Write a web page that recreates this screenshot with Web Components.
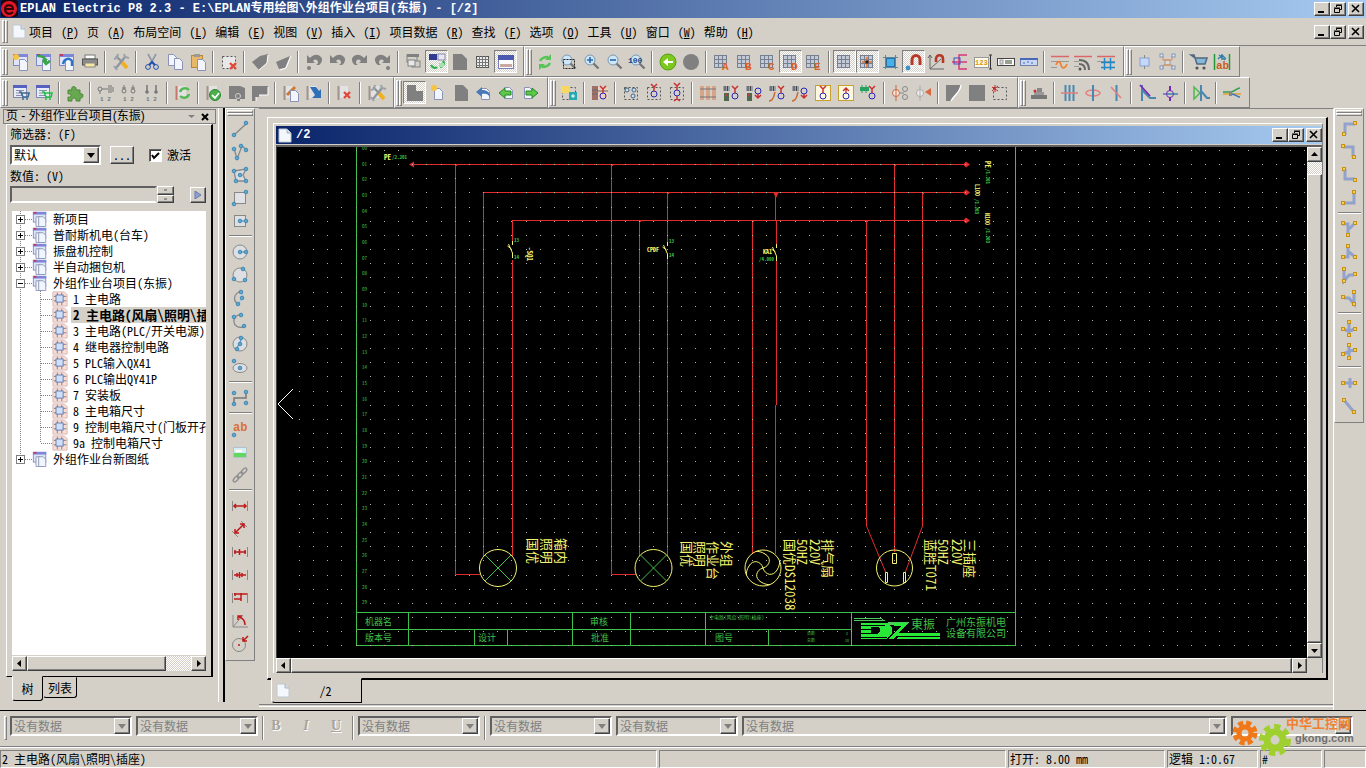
<!DOCTYPE html>
<html lang="zh-CN">
<head>
<meta charset="utf-8">
<title>EPLAN Electric P8 2.3</title>
<style>
    :root {
        --face: #d4d0c8;
        --shadow: #808080;
        --title: linear-gradient(90deg, #0a246a, #a6caf0);
        --song: "Noto Sans Mono CJK SC", "Liberation Mono", "Noto Sans CJK SC", monospace;
    }
    html, body { margin: 0; height: 100%; }
    body {
        display: flex;
        flex-direction: column;
        min-height: 100vh;
        overflow: hidden;
        background: var(--face);
        color: #000;
        font: 12px/16px var(--song);
    }
    .row { display: flex; height: 31px; }
    main { display: flex; flex: 1; min-height: 0; padding-right: 2px; }
    .divider { width: 4px; margin: 0 0 8px 2px; border-left: 1px solid #fff; border-right: 2px solid #000; }
</style>
</head>
<body>

<title-bar></title-bar>
<menu-bar></menu-bar>
<div class="row">
    <tool-band items="new open save print | options | cut copy paste | delete | navback navfwd | undolist undo redo redolist | windows *sync page table *window"></tool-band>
    <tool-band items="refresh zoomwin zoomin zoomout zoom100 | back forward | gridA gridB gridC *gridD gridE | *grid *snap objsnap *magnet magnetaxis tree123 n123 smart ruler | wave radio netgrid"></tool-band>
    <tool-band items="chipsmall chipnet | cart abtext"></tool-band>
</div>
<div class="row">
    <tool-band items="listcart listcartg | puzzle | dev1 dev2 dev3 | syncdoc | check graydoc grayflag | pencil arrowdoc | deldoc | tooldoc"></tool-band>
    <tool-band items="*graypage newpage graypage2 undopage pageleft pageright"></tool-band>
    <tool-band items="macro | strip | plug1 plug2 plug3 | coils termA termB termC termD boxA boxB greenterm | lamp1 lamp2 | triangle square dashbox"></tool-band>
    <tool-band items="press | lines1 lines2 lines3 | wireA wireB | shape | cable"></tool-band>
</div>

<main>
    <page-navigator heading="页 - 外组作业台项目(东振)">
        <page-tree></page-tree>
    </page-navigator>
    <div class="divider"></div>
    <tool-band vertical items="line polyline polygon rect rectc | circle circle3 arc arc3 sector ellipse | spline | text image link | dim1 dim2 dim3 dim4 dim5 dim6 dim7"></tool-band>
    <mdi-window heading="/2">
        <schematic-view></schematic-view>
    </mdi-window>
    <tool-band vertical items="cn1 cn2 cn3 cn4 | tn1 tn2 tn3 tn4 | cr1 cr2 | jp1 jp2"></tool-band>
</main>

<format-bar></format-bar>
<status-bar></status-bar>

<script>

// ---------- icons, drawn on an 18x18 box ----------

const p = (d, s, w = 1, f = 'none') => `<path d="${d}" stroke="${s}" stroke-width="${w}" fill="${f}"/>`;
const r = (x, y, w, h, f, s = 'none') => `<rect x="${x}" y="${y}" width="${w}" height="${h}" fill="${f}" stroke="${s}"/>`;
const c = (x, y, rad, f, s = 'none') => `<circle cx="${x}" cy="${y}" r="${rad}" fill="${f}" stroke="${s}"/>`;
const t = (x, y, size, fill, str) => `<text x="${x}" y="${y}" font-size="${size}" font-weight="700" fill="${fill}" font-family="Liberation Mono, monospace">${str}</text>`;
const n = (...pts) => pts.map(([x, y]) => c(x, y, 1.8, '#5fa8d0', '#3f88b4')).join('');

const sheet = (x, y) => p(`M${x} ${y}h5l3 3v8h-8z`, '#8a93b5', 1, '#f2f5fb');
const win = r(1.5, 1.5, 14, 11, '#dfe5f8', '#7f88c8') + r(1, 1, 15, 3, '#7d86d8') + r(2, 1, 3, 2, '#c03868');
const list = r(1.5, 1.5, 13, 12, '#e8ebf8', '#8088b0') + r(1, 1, 14, 3, '#5560c0') + p('M4 6.5h8M4 9h6M4 11.5h6', '#8a8fb0');
const cartAt = (x, y, col) => p(`M${x} ${y}h2l2 5h5l1-4h-7`, col, 1.6) + c(x + 4, y + 7, 1, col) + c(x + 8, y + 7, 1, col);
const cells = r(1.5, 2.5, 12, 12, '#c3cad6', '#778090') + p('M5.5 2v13M9.5 2v13M1 6.5h13M1 10.5h13', '#778090');
const lens = c(8, 7, 5, '#cfe6f8', '#7898b0') + p('M11.5 10.5l5 5', '#777', 2.4);
const grayDoc = p('M2.5 2v14', '#a0948c', 2) + r(4, 2, 8, 12, '#e2e2e2');
const cross = (x, y) => p(`M${x} ${y}l6 6m0-6l-6 6`, '#e04838', 2.4);
const wrench = (x) => p(`M${x + 5} 8l6 7`, '#f0b020', 4) + p(`M${x} 3l5 5`, '#8c949c', 2.4) + p(`M${x + 9} 4l-9 11`, '#8c949c', 2.2) + p(`M${x - 2} 6l3-1l1-4M${x + 8} 1l1 3l4 1M${x - 2} 13l3 4`, '#9aa2aa', 2);
const dashed = (f = 'none') => `<rect x="2.5" y="3.5" width="13" height="12" fill="${f}" stroke="#555" stroke-dasharray="2 2"/>`;
const arrow = (flip) => `<g transform="${flip ? 'translate(18 0) scale(-1 1)' : ''}">${p('M2 2v8h8L8 8c2-2 4-2 5 1c0 2-1 2-2 3h3c3-2 4-6 2-8c-3-3-7-3-11 1z', 'none', 0, '#808080')}</g>`;
const ring = (x, y, up) => c(x, y, 3, 'none', '#2828b8') + p(up ? `M${x} ${y - 3}v-4m-3-3l3 3l3-3` : `M${x} ${y + 3}v3m-3-2l3 3l3-3`, '#c83030', 1.5);
const termBox = r(1, 2, 7, 5, '#9aa0a8') + p('M3 2v5M5.5 2v5', '#444');
const dim = (d) => p('M1.5 4v10M16.5 4v10', '#888') + p(d, '#c01818', 1.5);
const gold = (d, ...pts) => p(d, '#93a2cc', 3) + pts.map(([x, y]) => r(x - 1.5, y - 1.5, 3, 3, '#f0d060', '#c89010')).join('');
const gridLetter = (letter) => cells + t(9, 17, 11, '#e06020', letter);

const ICONS = {
    new: win + sheet(7.5, 6.5) + c(4, 4, 3, '#f5c542'),
    open: win + sheet(7.5, 6.5) + p('M3 3c5 0 8 2 8 6M8 7l3 4l4-3', '#35a845', 2.6),
    save: win + sheet(7.5, 6.5) + p('M5 11c1-5 6-7 9-3v5', '#2e72c8', 2.4),
    print: r(4, 2, 10, 4, '#fff', '#777') + r(1.5, 6, 15, 6, '#8b8b8b', '#555') + r(4, 10, 10, 4, '#f6e8a0', '#888'),
    options: wrench(4),
    cut: p('M5 1l6 11M13 1L7 12', '#8c98a8', 1.6) + c(5, 14, 2.4, 'none', '#2050b0') + c(13, 14, 2.4, 'none', '#2050b0') + p('M6 12l3-3l3 3', '#2050b0', 2),
    copy: sheet(2.5, 1.5) + sheet(8.5, 5.5),
    paste: r(2.5, 2.5, 11, 12, '#e8b868', '#b88838') + r(5, 1, 6, 3, '#999') + sheet(8.5, 6.5),
    delete: dashed('#e8e8e8') + cross(10, 10),
    navback: p('M1 9l8-6l8-2l-1 9l-8 7z', 'none', 0, '#808080') + p('M17 2l-1 8l-8 7', '#fff'),
    navfwd: p('M2 9l14-6l-5 12l-6 1z', 'none', 0, '#808080') + p('M17 3l-5 12l-6 2', '#fff'),
    undolist: arrow() + c(4, 15, 2, '#808080'),
    undo: arrow(),
    redo: arrow(true),
    redolist: arrow(true) + c(14, 15, 2, '#808080'),
    windows: r(2, 2, 10, 7, 'none', '#808080') + r(2, 1, 12, 3, '#808080') + r(7, 8, 8, 6, '#d4d0c8', '#808080') + r(3, 7, 7, 6, '#e8e8e8', '#808080'),
    sync: r(1, 1, 8, 6, '#303c90') + r(10, 1, 7, 6, '#e8e8f4', '#88a') + p('M3 12c2 4 5 3 6 2M15 8c2 3 0 5-3 6', '#30b050', 2.4) + r(11, 10, 5, 4, '#a8e0b0'),
    page: p('M2 1h9l5 5v11H2z', 'none', 0, '#808080'),
    table: r(2.5, 3.5, 12, 11, '#eee', '#555') + p('M5.5 3v12M8.5 3v12M11.5 3v12M2 6.5h13M2 9.5h13M2 12.5h13', '#777'),
    window: r(1.5, 2.5, 15, 13, '#fbfbfb', '#7880b8') + r(1, 2, 16, 5, '#4a5ab0') + r(3, 11, 12, 3, '#c8a8a0'),

    refresh: p('M4 8c2-4 5-4 8-4M14 10c-2 4-5 4-8 4', '#58c458', 2.6) + p('M15 1v6h-6zM3 17v-6h6z', 'none', 0, '#58c458'),
    zoomwin: lens + `<rect x="4.5" y="6.5" width="11" height="9" fill="none" stroke="#222" stroke-dasharray="2 1"/>`,
    zoomin: lens + p('M5 7h6M8 4v6', '#2868a8', 1.6),
    zoomout: lens + p('M5 7h6', '#2868a8', 1.6),
    zoom100: lens + t(0, 10, 8, '#204880', '100'),
    back: c(9, 9, 8, '#7cc820', '#58a010') + p('M4 9l5-4v3h5v2H9v3z', 'none', 0, '#fff'),
    forward: c(9, 9, 8, '#808080'),
    gridA: gridLetter('A'),
    gridB: gridLetter('B'),
    gridC: gridLetter('C'),
    gridD: gridLetter('D'),
    gridE: gridLetter('E'),
    grid: cells,
    snap: cells + p('M8 4v10M3 9h10', '#e07030', 1.5) + r(6.5, 7.5, 3, 3, '#222'),
    objsnap: r(4.5, 5.5, 8, 8, '#48b0e8', '#3070a0') + p('M3.5 2v14M13.5 2v14M1 4.5h15M1 14.5h15', '#5888a8'),
    magnet: p('M7 13V7c0-6 8-6 8 0v6', '#b83828', 3) + r(5, 12, 4, 3, '#eee') + r(13, 12, 4, 3, '#eee') + c(3, 15, 2.4, '#4090c0'),
    magnetaxis: p('M2 2v14h14M2 2l-2 3M2 2l2 3M2 16L13 6', '#666') + p('M8 9V6c0-5 7-5 7 0v4', '#b83828', 2.6),
    tree123: p('M16 2H8v14h8M8 9h8M1 9h7', '#d83878', 1.5) + r(3, 5, 6, 6, 'none', '#4050c0'),
    n123: r(0.5, 4.5, 14, 10, '#fffbe8', '#999') + t(1, 12, 7, '#d89800', '123') + p('M16.5 2v14M15 2h3M15 16h3', '#333'),
    smart: r(0.5, 5.5, 17, 7, '#fff', '#444') + r(8, 7, 7, 4, '#9aa090') + r(3, 7, 3, 4, '#ddd', '#999'),
    ruler: r(0.5, 5.5, 17, 7, '#c8d8f4', '#7080a8') + r(0, 5, 18, 2, '#4868b8') + p('M3 10h2M7 9h2M11 10h2', '#4868b8'),
    wave: p('M0 3.5h18', '#d86868', 1.5) + p('M0 8.5h18M0 14.5h6', '#999') + p('M5 12c2-5 4-4 5 0s4 4 6-1', '#f08030', 1.6),
    radio: p('M0 3.5h18', '#d86868', 1.5) + p('M0 8.5h5M0 13.5h5', '#999') + p('M5 7c7 0 10 4 10 10M5 11c4 0 6 2 6 6', '#666', 2) + c(6, 16, 1.5, '#555'),
    netgrid: p('M0 3.5h18', '#d86868', 1.5) + p('M0 8.5h18', '#999') + p('M7.5 5v12M13.5 5v12M4 9.5h14M4 14.5h14', '#2088c8', 1.5),
    chipsmall: r(4, 5, 9, 8, '#c4d8f8', '#88a0d0') + p('M8.5 2v3M8.5 13v3', '#888'),
    chipnet: r(6, 7, 5, 5, '#ddd', '#999') + p('M4 3v4h9V3M4 16v-4h9v4', '#e08850') + [[1, 1], [13, 1], [1, 13], [13, 13]].map(([x, y]) => r(x, y, 3, 3, '#eee', '#7c94b8')).join(''),
    cart: p('M1 2h3l3 9h8l2-6H5z', '#506880', 1.5, '#88b8d8') + c(7, 15, 1.6, '#555') + c(14, 15, 1.6, '#555'),
    abtext: p('M1.5 1v16M16.5 1v16', '#209838', 1.5) + t(3, 16, 11, '#c86020', 'ab') + p('M5 6l4-4l4 4M6 2l6 5M9 1v6', '#3080a8', 1.4),

    listcart: list + cartAt(7, 8, '#3c6890'),
    listcartg: list + cartAt(7, 8, '#20c040'),
    puzzle: p('M2 6h4c-2-4 5-5 4 0h4v4c4-2 4 5 0 4v3h-4c1-4-5-4-4 0H2v-4c4 1 4-4 0-3z', '#488838', 1, '#68a850'),
    dev1: c(3, 5, 2, 'none', '#777') + p('M5 5h6M12 1v8M14 1v8M3 7v3M16 3v5', '#777') + t(3, 17, 6, '#777', '1 2'),
    dev2: c(4, 7, 2, 'none', '#777') + c(13, 7, 2, 'none', '#777') + p('M4 1v4M13 1v4M2 4h4M11 4h4', '#777') + t(3, 17, 6, '#777', '1 2'),
    dev3: c(4, 8, 1.8, '#777') + c(13, 8, 1.8, '#777') + p('M4 1v6M13 1v6', '#777', 1.5) + t(3, 17, 6, '#777', '1 2'),
    syncdoc: p('M2.5 2v14', '#c87870', 2) + r(4, 2, 8, 12, '#e2e2e2') + p('M6 8c1-4 6-5 9-2M15 10c-1 4-6 5-9 2', '#50b850', 2.4),
    check: grayDoc + c(10, 11, 5.5, '#48b048', '#288830') + p('M7 11l3 3l4-5', '#fff', 1.8),
    graydoc: p('M1 2h11l5 2v11h-5v2H9v-2H1z', 'none', 0, '#808080') + c(10, 12, 2.5, '#808080', '#d4d0c8'),
    grayflag: p('M1 2h16v9h-9v2H5v4H1z', 'none', 0, '#808080') + p('M17 3v8h-9M5 13v4', '#fff'),
    pencil: grayDoc + p('M5 11l8-8', '#d07830', 3) + sheet(8.5, 6.5),
    arrowdoc: grayDoc + p('M5 3l6 0l3 4l2-2v9H7l3-3z', 'none', 0, '#3070b8'),
    deldoc: grayDoc + cross(8, 8),
    tooldoc: grayDoc + wrench(6),
    graypage: p('M1 1h9v6h7v10H1z', 'none', 0, '#808080'),
    newpage: sheet(5.5, 4.5) + c(5, 4, 3, '#f5c542'),
    graypage2: p('M3 1h8l5 5v11H3z', 'none', 0, '#808080'),
    undopage: sheet(6.5, 4.5) + p('M1 8l6-5v3c5 0 8 2 8 7c-2-3-4-4-8-3v3z', 'none', 0, '#4878b8'),
    pageleft: sheet(6.5, 3.5) + p('M1 9l6-5v3h6v4H7v3z', '#208828', 1, '#60c848'),
    pageright: sheet(3.5, 3.5) + p('M17 9l-6-5v3H5v4h6v3z', '#208828', 1, '#60c848'),
    macro: dashed() + r(1, 2, 8, 7, '#f8d860') + r(9, 8, 8, 8, '#28a8b0') + p('M11 12h4M13 10v4', '#fff'),
    strip: r(1, 2, 6, 14, '#a07068') + r(7, 3, 10, 12, '#ecd0c0') + p('M1 6h6M1 10h6M7 7h10', '#666') + ring(12, 12, true),
    plug1: dashed() + c(5, 6, 2, '#cde', '#468') + c(12, 6, 2, '#cde', '#468') + c(11, 12, 2, '#cde', '#468'),
    plug2: dashed() + ring(9, 10, true),
    plug3: dashed() + ring(9, 9, true) + p('M9 12v4M6 17l3-2l3 2', '#c83030', 1.5),
    coils: [2, 8, 14].map(x => p(`M${x} 2v14M${x + 2} 2v14`, '#d87848')).join('') + p('M1 5h16M1 13h16', '#777'),
    termA: termBox + r(2, 9, 5, 8, '#506850') + ring(13, 12, true) + c(4, 11, 1, '#e03030'),
    termB: termBox + r(2, 9, 5, 8, '#506850') + ring(13, 7, false) + c(4, 11, 1, '#e03030'),
    termC: termBox + p('M1 17c5 0 5-6 6-9', '#c86830', 1.5) + ring(13, 12, true),
    termD: termBox + p('M1 17c5 0 5-6 6-9', '#c86830', 1.5) + ring(13, 7, false),
    boxA: r(1.5, 1.5, 15, 15, '#fff8e0', '#c8a030') + ring(9, 12, true),
    boxB: r(1.5, 1.5, 15, 15, '#fff8e0', '#c8a030') + c(9, 12, 3, 'none', '#2828b8') + p('M9 9V4m-3 3l3-3l3 3', '#c83030', 1.3),
    greenterm: r(0, 3, 9, 4, '#28a060') + p('M2 1v8M6 1v8', '#28a060') + ring(12, 12, true),
    lamp1: c(5, 9, 3.5, '#f8e8e0', '#c86840') + p('M5 1v16', '#c86840') + c(14, 5, 2.5, 'none', '#888') + c(14, 13, 2.5, 'none', '#888') + p('M9 9h4', '#888'),
    lamp2: c(6, 9, 3.5, '#eee', '#aaa') + p('M6 1v16', '#aaa') + p('M11 8l6-4v8z', 'none', 0, '#d86840'),
    triangle: p('M1 1h15C15 9 9 11 6 17H1z', 'none', 0, '#808080') + p('M16 1C15 9 9 11 6 17', '#fff', 1.5),
    square: r(1, 1, 16, 16, '#808080'),
    dashbox: dashed() + p('M4 1v7M1 3l6 4M7 2L1 7', '#c82828'),
    press: r(1, 11, 16, 4, '#777') + r(4, 8, 10, 3, '#999') + r(7, 4, 5, 4, '#888') + c(5, 7, 1.5, '#c83030'),
    lines1: p('M4.5 1v16M8.5 1v16M12.5 1v16', '#4888b0', 2) + p('M0 9h17', '#e08080', 1.6),
    lines2: `<ellipse cx="9" cy="9" rx="7" ry="3" fill="none" stroke="#e08080" stroke-width="1.6"/>` + p('M9 1v16', '#4888b0', 2),
    lines3: p('M9.5 1v16', '#4888b0', 2) + p('M4 3l10 11', '#e08080', 1.6),
    wireA: p('M4 1v16M4 6l8 8h6', '#4888b0', 2) + p('M2 1l10 11', '#7828b8', 1.8),
    wireB: p('M2 10h15', '#4888b0', 1.6) + p('M9 2v5M9 13v4', '#7828b8', 2) + c(9, 10, 3.5, 'none', '#7828b8'),
    shape: p('M2 3l6 6l-6 6z', '#48b848', 1.4) + p('M9 1v16M9 7l6 7h3', '#4888b0', 2),
    cable: p('M0 8h7c5 0 6-4 10-4', '#30a050', 1.5) + p('M0 10h18', '#e0a030', 1.5) + p('M8 10c5 0 6 3 9 3', '#3878c0', 1.5) + r(6, 7, 3, 5, '#888'),

    line: p('M3 15L15 4', '#888', 1.5) + n([3, 15], [15, 3]),
    polyline: p('M3 5l3 11l5-13l5 4', '#888', 1.3) + n([3, 6], [6, 15], [10, 3], [15, 7]),
    polygon: p('M3 5l12-2l-3 6l3 6H5z', '#888', 1.3, '#d8dce2') + n([3, 5], [15, 3], [15, 15], [5, 15], [9, 9]),
    rect: r(3.5, 3.5, 11, 11, '#e2e2e6', '#888') + n([3, 15], [15, 3]),
    rectc: r(3.5, 3.5, 11, 11, '#dedfe3', '#888') + p('M9 9h6', '#3f88b4') + n([9, 9], [15, 9]),
    circle: c(9, 9, 7, '#dedfe3', '#888') + p('M9 9h6', '#3f88b4') + n([9, 9], [15, 9]),
    circle3: c(9, 9, 7, '#dedfe3', '#888') + n([12, 3], [3, 13], [14, 14]),
    arc: p('M10 2C2 5 2 12 7 15', '#888', 1.3) + p('M10 2l2 6l-5 7', '#90c8e8') + n([10, 3], [11, 9], [7, 15]),
    arc3: p('M10 3C0 2 0 18 13 15', '#888', 1.3) + n([10, 3], [3, 5], [13, 14]),
    sector: c(9, 9, 7, '#dedfe3', '#888') + p('M5 15l6-12', '#3f88b4') + n([10, 3], [9, 9], [6, 14]),
    ellipse: `<ellipse cx="9" cy="10" rx="7" ry="4.5" fill="#dedfe3" stroke="#888"/>` + n([3, 3], [9, 10]),
    spline: p('M3 15v-6h12V4', '#777', 1.5) + n([3, 4], [3, 15], [15, 3], [15, 14]),
    text: t(2, 11, 12, '#d87038', 'ab') + n([3, 15]),
    image: r(2.5, 4.5, 13, 10, '#d8ecf8', '#b8c0c8') + r(3, 10, 12, 4, '#60d860') + r(5, 7, 6, 2, '#fff'),
    link: [[5, 13], [9, 9], [13, 5]].map(([x, y]) => `<ellipse cx="${x}" cy="${y}" rx="3.5" ry="1.8" transform="rotate(-45 ${x} ${y})" fill="none" stroke="#909090" stroke-width="1.4"/>`).join(''),
    dim1: dim('M3 9h12M5 7L3 9l2 2M13 7l2 2l-2 2'),
    dim2: p('M1 11l6 6M10 1l6 6', '#888') + p('M4 13l9-9M4 9v4h4M9 4h4v4', '#c01818', 1.5),
    dim3: dim('M3 9h12M8.5 6v6M4 7v4M14 7v4'),
    dim4: dim('M3 9h12M6 7v4M11 7v4M8.5 6v6'),
    dim5: dim('M3 5h13M3 10h7M4 4v3M10 4v8'),
    dim6: p('M2 3v12h15M2 15L12 3', '#888') + p('M8 5c4 1 6 4 6 8M7 8V4h4', '#c01818', 1.5),
    dim7: c(8, 10, 6.5, 'none', '#888') + c(8, 10, 1, '#c01818') + p('M17 1l-5 5M12 2v4h4', '#c01818', 1.5),

    cn1: gold('M5 15V4h10', [4, 14], [15, 3]),
    cn2: gold('M3 4h10v10', [3, 3], [14, 14]),
    cn3: gold('M5 3v10h10', [4, 3], [15, 14]),
    cn4: gold('M3 14h11V4', [3, 14], [14, 3]),
    tn1: gold('M2 4h6v10M9 9l6-6', [3, 3], [15, 3], [8, 15]),
    tn2: gold('M2 14h6V4M9 9l6 5', [3, 14], [15, 14], [8, 3]),
    tn3: gold('M4 3v12l5-6h5', [4, 3], [4, 15], [15, 8]),
    tn4: gold('M14 3v12l-5-6H4', [14, 3], [14, 15], [3, 8]),
    cr1: gold('M9 3v12M3 9c3 0 4 2 4 3M15 9c-3 0-4 2-4 3', [9, 2], [3, 9], [15, 9], [9, 15]),
    cr2: gold('M9 3v12M3 11l5-2M10 8l5-1', [9, 2], [3, 11], [15, 7], [9, 15]),
    jp1: gold('M3 9h12M10 4v10', [3, 9], [15, 9]),
    jp2: gold('M4 3l10 12', [4, 3], [14, 15]),
};

const BEVEL = `
    .raised {
        background: var(--face);
        border: 1px solid;
        border-color: #fff #404040 #404040 #fff;
        box-shadow: inset -1px -1px 0 #808080;
    }
    .dither {
        background: repeating-conic-gradient(#fff 0 25%, #d4d0c8 0 50%) 0 0 / 2px 2px;
    }
`;

const pageIcon = `<svg width="14" height="15" viewBox="0 0 14 15"><path d="M1 1h8l4 4v9H1z" fill="#f4f7fb" stroke="#c0c8d4"/><path d="M9 1v4h4" fill="#d8e0ea" stroke="#a8b4c0"/></svg>`;


// minimize, restore, close
class WinButtons extends HTMLElement {

    constructor() {

        super();

        this.attachShadow({mode: "open"}).innerHTML = `
            <style>
                ${BEVEL}
                :host { display: flex; height: 14px; }
                button { width: 16px; height: 14px; padding: 0; display: grid; place-items: center; }
                button:last-child { margin-left: 2px; }
                path { fill: none; stroke: #000; }
            </style>
            <button class="raised" aria-label="minimize"><svg width="12" height="10"><path d="M2 8h6" stroke-width="2"/></svg></button>
            <button class="raised" aria-label="restore"><svg width="12" height="10"><path d="M4.5 3V1.5h5v4H8M4 1h6M2.5 5v3.5h5V4.5h-5M2 4h6"/></svg></button>
            <button class="raised" aria-label="close"><svg width="12" height="10"><path d="M2 1l7 7M9 1l-7 7" stroke-width="1.6"/></svg></button>
        `;

    }

}

customElements.define('win-buttons', WinButtons);


class TitleBar extends HTMLElement {

    constructor() {

        super();

        this.attachShadow({mode: "open"}).innerHTML = `
            <style>
                :host {
                    display: flex;
                    align-items: center;
                    height: 18px;
                    padding-right: 2px;
                    background: var(--title);
                    color: #fff;
                    font: bold 12px/18px "Liberation Mono", "Noto Sans CJK SC", monospace;
                    white-space: pre;
                }
                span { flex: 1; margin-left: 2px; }
            </style>
            <svg width="18" height="18" viewBox="0 0 18 18">
                <rect x="1" width="17" height="17" rx="3" fill="#200508"/>
                <ellipse cx="9" cy="9" rx="8" ry="8" fill="#e01828"/>
                <path d="M5 9h8c0-5-8-5-8 0s5 6 8 3" fill="none" stroke="#300" stroke-width="2"/>
            </svg>
            <span>EPLAN Electric P8 2.3 - E:\\EPLAN专用绘图\\外组作业台项目(东振) - [/2]</span>
            <win-buttons></win-buttons>
        `;

    }

}

customElements.define('title-bar', TitleBar);


class MenuBar extends HTMLElement {

    menus = [
        ['项目', 'P'], ['页', 'A'], ['布局空间', 'L'], ['编辑', 'E'], ['视图', 'V'], ['插入', 'I'],
        ['项目数据', 'R'], ['查找', 'F'], ['选项', 'O'], ['工具', 'U'], ['窗口', 'W'], ['帮助', 'H'],
    ];

    constructor() {

        super();

        this.attachShadow({mode: "open"}).innerHTML = `
            <style>
                :host { display: flex; align-items: center; height: 27px; padding: 0 2px; border-bottom: 1px solid #808080; }
                .grip { width: 1px; height: 21px; border: 1px solid; border-color: #fff #808080 #808080 #fff; }
                svg { margin: 0 3px 0 4px; }
                nav { display: flex; flex: 1; }
                button { border: 0; background: none; padding: 0 8px 0 0; margin: 0; font: inherit; white-space: pre; }
                button span { margin-left: 2px; }
            </style>
            <div class="grip"></div><div class="grip"></div>
            ${pageIcon}
            <nav>${this.menus.map(([name, key]) => `<button>${name}<span> (<u>${key}</u>)</span></button>`).join('')}</nav>
            <win-buttons></win-buttons>
        `;

    }

}

customElements.define('menu-bar', MenuBar);


// items: icon names; "|" is a separator, a leading "*" marks a pressed button
class ToolBand extends HTMLElement {

    static get observedAttributes() {

        return ['items'];

    }

    constructor() {

        super();

        this.attachShadow({mode: "open"});

    }

    attributeChangedCallback() {

        this.shadowRoot.innerHTML = this.template;

    }

    button(name) {

        if (name === '|') return '<hr>';

        const key = name.replace('*', '');

        return `<button aria-label="${key}" class="${name[0] === '*' ? 'on dither' : ''}"><svg width="18" height="18" viewBox="0 0 18 18">${ICONS[key]}</svg></button>`;

    }

    get template() {

        return `
            <style>
                ${BEVEL}
                :host {
                    display: flex;
                    align-items: center;
                    box-sizing: border-box;
                    flex: none;
                    padding: 0 6px 0 1px;
                    border: 1px solid;
                    border-color: #fff #808080 #808080 #fff;
                }
                .grip { width: 1px; height: 24px; border: 1px solid; border-color: #fff #808080 #808080 #fff; }
                .grip + button { margin-left: 1px; }
                button { width: 23px; height: 23px; padding: 0; border: 1px solid transparent; background-color: transparent; display: grid; place-items: center; }
                button.on { border-color: #808080 #fff #fff #808080; }
                svg { overflow: visible; }
                hr { box-sizing: border-box; width: 2px; height: 22px; margin: 0 3px; border: 0; border-left: 1px solid #808080; border-right: 1px solid #fff; }
                :host([vertical]) { flex-direction: column; align-self: flex-start; width: 30px; padding: 1px 0 5px; }
                :host([vertical]) .grip { width: 24px; height: 1px; }
                :host([vertical]) .grip + button { margin: 1px 0 0; }
                :host([vertical]) hr { width: 23px; height: 2px; margin: 3px 0; border: 0; border-top: 1px solid #808080; border-bottom: 1px solid #fff; }
            </style>
            <div class="grip"></div><div class="grip"></div>
            ${this.getAttribute('items').split(' ').map(name => this.button(name)).join('')}
        `;

    }

}

customElements.define('tool-band', ToolBand);


class ScrollBar extends HTMLElement {

    constructor() {

        super();

        this.attachShadow({mode: "open"}).innerHTML = `
            <style>
                ${BEVEL}
                :host { display: flex; height: 15px; }
                :host([vertical]) { flex-direction: column; width: 15px; height: auto; }
                button { width: 15px; height: 15px; padding: 0; flex: none; display: grid; place-items: center; }
                .track { display: flex; flex: 1; min-height: 0; }
                :host([vertical]) .track { flex-direction: column; }
                .thumb { flex: 1; }
                .gap-start { flex: none; width: var(--before, 0); }
                .gap-end { flex: none; width: var(--after, 0); }
                :host([vertical]) .gap-start { width: auto; height: var(--before, 0); }
                :host([vertical]) svg { transform: rotate(90deg); }
            </style>
            <button class="raised" aria-label="back"><svg width="9" height="9"><path d="M6 1v7L2 4.5z"/></svg></button>
            <div class="track dither"><div class="gap-start"></div><div class="thumb raised"></div><div class="gap-end"></div></div>
            <button class="raised" aria-label="forward"><svg width="9" height="9"><path d="M3 1v7l4-3.5z"/></svg></button>
        `;

    }

}

customElements.define('scroll-bar', ScrollBar);


class ComboBox extends HTMLElement {

    constructor() {

        super();

        const off = this.hasAttribute('disabled');

        this.attachShadow({mode: "open"}).innerHTML = `
            <style>
                ${BEVEL}
                :host {
                    display: flex;
                    box-sizing: border-box;
                    height: 20px;
                    background: #fff;
                    border: 2px solid;
                    border-color: #606060 #fff #fff #606060;
                }
                :host([disabled]) { background: var(--face); }
                select { flex: 1; min-width: 0; border: 0; padding: 0 2px; background: transparent; appearance: none; font: inherit; color: #000; opacity: 1; }
                select:disabled { color: #808080; }
                i { width: 14px; display: grid; place-items: center; pointer-events: none; }
            </style>
            <select aria-label="${this.getAttribute('label')}" ${off ? 'disabled' : ''}><option>${this.getAttribute('value')}</option></select>
            <i class="raised"><svg width="8" height="5"><path d="M0 0h8L4 5z" fill="${off ? '#808080' : '#000'}"/></svg></i>
        `;

    }

}

customElements.define('combo-box', ComboBox);


// docked panel with the page tree
class PageNavigator extends HTMLElement {

    constructor() {

        super();

        this.attachShadow({mode: "open"}).innerHTML = `
            <style>
                ${BEVEL}
                :host { display: flex; flex-direction: column; width: 216px; flex: none; padding-bottom: 9px; box-sizing: border-box; }
                header {
                    display: flex;
                    align-items: center;
                    height: 13px;
                    margin: 1px 0 0 3px;
                    padding: 0 2px;
                    border: 1px solid #808080;
                    font: 12px/13px "Liberation Sans", "Noto Sans CJK SC", sans-serif;
                }
                header span { flex: 1; white-space: nowrap; }
                header svg { margin: 0 3px; }
                .body {
                    display: flex;
                    flex-direction: column;
                    flex: 1;
                    min-height: 0;
                    margin: 0 3px 0 6px;
                    padding: 1px 4px 5px 3px;
                    border: 1px solid;
                    border-color: #fff #000 #000 #fff;
                    border-right-width: 2px;
                }
                .line { display: flex; align-items: center; height: 16px; white-space: pre; }
                .filter { height: 20px; margin: 3px 0; }
                combo-box { width: 91px; }
                .more { width: 24px; height: 18px; margin: 0 15px 0 9px; padding: 0; font: inherit; line-height: 12px; }
                input[type=checkbox] {
                    appearance: none;
                    width: 13px;
                    height: 13px;
                    margin: 0 5px 0 0;
                    background: #fff;
                    border: 1px solid;
                    border-color: #606060 #fff #fff #606060;
                    box-shadow: inset 1px 1px 0 #404040;
                }
                input[type=checkbox]:checked { background: #fff url('data:image/svg+xml,<svg xmlns="http://www.w3.org/2000/svg" viewBox="0 0 11 11"><path d="M2 5l2 3l5-5" fill="none" stroke="black" stroke-width="2"/></svg>'); }
                label { display: flex; align-items: center; }
                .value { height: 17px; margin: 2px 0 8px; }
                .value input { flex: 1; min-width: 0; height: 17px; box-sizing: border-box; border: 2px solid; border-color: #606060 #d4d0c8 #fff #606060; background: var(--face); }
                .spin { display: flex; flex-direction: column; width: 17px; height: 17px; margin-right: 16px; }
                .spin button { flex: 1; padding: 0; min-height: 0; display: grid; place-items: center; }
                .go { width: 16px; height: 16px; padding: 0; margin-right: 1px; display: grid; place-items: center; }
                .tree { flex: 1; min-height: 0; overflow: hidden; background: #fff; margin: 0 1px 0 2px; }
                scroll-bar { --after: 25px; margin: 1px 1px 0 2px; }
                .tabs { display: flex; align-items: flex-start; margin-left: 12px; }
                .tabs button { height: 21px; padding: 0; width: 34px; border: 1px solid; border-color: transparent #000 #000 transparent; border-radius: 0 0 3px 3px; background: var(--face); font: inherit; }
                .tabs .sel { width: 31px; height: 25px; margin-top: -1px; border-left-color: #fff; }
            </style>
            <header>
                <span>${this.getAttribute('heading')}</span>
                <svg width="7" height="5"><path d="M0 1h7L3.5 4z" fill="#808080"/></svg>
                <svg width="9" height="8"><path d="M1 1l6 6M7 1L1 7" stroke="#000" stroke-width="2"/></svg>
            </header>
            <div class="body">
                <div class="line">筛选器: (F)</div>
                <div class="line filter">
                    <combo-box label="筛选器" value="默认"></combo-box>
                    <button class="more raised">...</button>
                    <label><input type="checkbox" checked>激活</label>
                </div>
                <label class="line" for="val">数值: (V)</label>
                <div class="line value">
                    <input id="val" type="text">
                    <div class="spin">
                        <button class="raised" aria-label="up"><svg width="3" height="2"><path d="M0 1h3" stroke="#555"/></svg></button>
                        <button class="raised" aria-label="down"><svg width="3" height="2"><path d="M0 1h3" stroke="#555"/></svg></button>
                    </div>
                    <button class="go raised" aria-label="go"><svg width="8" height="8"><path d="M1 0l6 4l-6 4z" fill="#8ca0d0" stroke="#6878b0"/></svg></button>
                </div>
                <div class="tree"><slot></slot></div>
                <scroll-bar></scroll-bar>
            </div>
            <div class="tabs"><button class="sel">树</button><button>列表</button></div>
        `;

    }

}

customElements.define('page-navigator', PageNavigator);


class PageTree extends HTMLElement {

    data = [
        { name: '新项目' },
        { name: '普耐斯机电(台车)' },
        { name: '振盘机控制' },
        { name: '半自动捆包机' },
        {
            name: '外组作业台项目(东振)',
            pages: [
                '1 主电路', '2 主电路(风扇\\照明\\插座)', '3 主电路(PLC/开关电源)', '4 继电器控制电路', '5 PLC输入QX41',
                '6 PLC输出QY41P', '7 安装板', '8 主电箱尺寸', '9 控制电箱尺寸(门板开孔)', '9a 控制电箱尺寸',
            ],
        },
        { name: '外组作业台新图纸', last: true },
    ];

    constructor() {

        super();

        this.attachShadow({mode: "open"}).innerHTML = this.template;

    }

    project({ name, pages, last }) {

        return `
            <li>
                <div class="node">
                    <svg width="20" height="16">
                        <path d="M8.5 0v${last ? 8 : 16}M13 8.5h7" stroke="#808080" stroke-dasharray="1 1"/>
                        <rect x="4.5" y="4.5" width="8" height="8" fill="#fff" stroke="#808080"/>
                        <path d="M6 8.5h5${pages ? '' : 'M8.5 6v5'}" stroke="#000"/>
                    </svg>
                    <svg width="16" height="16" viewBox="0 0 18 18">${win + sheet(4.5, 6.5) + sheet(7.5, 6.5)}</svg>
                    <span>${name}</span>
                </div>
                ${pages ? `<ul>${pages.map((page, i) => this.page(page, i === 1, i === pages.length - 1)).join('')}</ul>` : ''}
            </li>
        `;

    }

    page(name, selected, last) {

        return `
            <li class="node ${selected ? 'selected' : ''}">
                <svg width="40" height="16">
                    <path d="M8.5 0v16M28.5 0v${last ? 8 : 16}M29 8.5h11" stroke="#808080" stroke-dasharray="1 1"/>
                </svg>
                <svg width="16" height="16" viewBox="0 0 18 18">
                    <path d="M1 1h13l3 3v13H1z" fill="#f8dcd8" stroke="#d8b8b0"/>
                    <path d="M6 2v14M11 2v14M2 6h14M2 11h14" stroke="#707888"/>
                    <rect x="4.5" y="4.5" width="8" height="8" fill="#d0e0fc" stroke="#6078a8"/>
                </svg>
                <span>${name}</span>
            </li>
        `;

    }

    get template() {

        return `
            <style>
                :host { display: block; }
                ul { list-style: none; margin: 0; padding: 0; }
                .node { display: flex; height: 16px; line-height: 16px; white-space: pre; }
                .node svg { flex: none; fill: none; }
                .node span { flex: 1; padding-left: 2px; margin-left: 3px; }
                .selected span { background: var(--face); font-weight: 700; font-size: 13px; }
            </style>
            <ul>${this.data.map(item => this.project(item)).join('')}</ul>
        `;

    }

}

customElements.define('page-tree', PageTree);


// child window of the editor, with scroll bars and the document tab
class MdiWindow extends HTMLElement {

    constructor() {

        super();

        const heading = this.getAttribute('heading');

        this.attachShadow({mode: "open"}).innerHTML = `
            <style>
                :host {
                    display: flex;
                    flex-direction: column;
                    flex: 1;
                    min-width: 0;
                    margin-left: 4px;
                    padding: 8px 5px 3px 8px;
                    box-sizing: border-box;
                    border-top: 1px solid #808080;
                    border-right: 1px solid #fff;
                }
                .frame {
                    display: flex;
                    flex: 1;
                    min-height: 0;
                    padding: 5px 3px 5px 5px;
                    border: 1px solid;
                    border-color: #fff #000 #000 #fff;
                    border-right-width: 2px;
                    border-bottom-width: 2px;
                }
                .window {
                    display: flex;
                    flex-direction: column;
                    flex: 1;
                    min-width: 0;
                    padding: 2px 0 0 2px;
                    border: 1px solid #fff;
                    border-right-color: #808080;
                    border-bottom: 0;
                }
                header { display: flex; align-items: center; height: 18px; padding-left: 2px; background: var(--title); color: #fff; }
                header span { flex: 1; padding-left: 4px; font: bold 12px/18px "Liberation Mono", monospace; }
                .view { display: flex; flex: 1; min-height: 0; margin-top: 1px; border-top: 2px solid #606060; border-left: 1px solid #404040; }
                .paper { display: flex; flex: 1; min-width: 0; background: #000; }
                .bottom { display: flex; }
                .bottom scroll-bar { flex: 1; }
                .corner { width: 15px; }
                scroll-bar[vertical] { --before: 12px; }
                .tab {
                    display: flex;
                    align-items: center;
                    width: 85px;
                    height: 23px;
                    margin: -2px 0 0 4px;
                    padding-left: 4px;
                    background: var(--face);
                    border: 1px solid;
                    border-color: transparent #000 #000 #fff;
                    border-radius: 0 0 0 4px;
                }
                .tab button { flex: 1; border: 0; background: none; font: inherit; }
                .edge { height: 1px; border-top: 1px solid #808080; border-bottom: 1px solid #fff; margin: 1px -5px 0 -8px; }
            </style>
            <div class="frame">
                <div class="window">
                    <header>${pageIcon}<span>${heading}</span><win-buttons></win-buttons></header>
                    <div class="view">
                        <div class="paper"><slot></slot></div>
                        <scroll-bar vertical></scroll-bar>
                    </div>
                    <div class="bottom"><scroll-bar></scroll-bar><div class="corner"></div></div>
                </div>
            </div>
            <div class="tab">${pageIcon}<button>${heading}</button></div>
            <div class="edge"></div>
        `;

    }

}

customElements.define('mdi-window', MdiWindow);


class SchematicView extends HTMLElement {

    red = '#e02c2c';
    yellow = '#f4f470';
    green = '#3fc04a';

    constructor() {

        super();

        this.attachShadow({mode: "open"}).innerHTML = this.template;

    }

    // grid points
    get dots() {

        let d = '';

        for (let i = 0; i < 72; i++) {
            for (let j = 0; j < 36; j++) {
                d += `M${Math.round(299 + i * 14.16)} ${Math.round(150 + j * 14.15)}.5h1`;
            }
        }

        return `<path class="crisp" d="${d}" stroke="#b4b4a8"/>`;

    }

    label(x, y, size, fill, str) {

        return `<text x="${x}" y="${y}" font-size="${size}" fill="${fill}">${str}</text>`;

    }

    // text turned a quarter clockwise, y is where it starts
    turned(x, y, size, fill, str) {

        return `<text transform="translate(${x} ${y}) rotate(90)" font-size="${size}" fill="${fill}">${str}</text>`;

    }

    get rulerMarks() {

        return Array.from({ length: 30 }, (_, i) => this.label(362, 150 + Math.round(i * 15.67), 5, this.green, String(i).padStart(2, '0'))).join('');

    }

    get frame() {

        return `<path class="crisp" stroke="${this.green}" d="
            M356.5 140V645.5H1015.5V140M356 612.5H1015M356 629.5H851
            M408.5 612v33M572.5 612v33M630.5 612v33M705.5 612v33M851.5 612v33
            M474.5 629v16M507.5 629v16M768.5 629v16"/>`;

    }

    get wires() {

        const lines = [
            'M410 164.5H968', 'M483 192.5H968', 'M512 220.5H968',
            'M455.5 164V574.5H480', 'M611.5 164V574.5H636',
            'M483.5 192V556', 'M512.5 220V242', 'M512.5 260V556',
            'M639.5 220V556', 'M667.5 192V242', 'M667.5 258V556',
            'M752.5 220V554', 'M775.5 192V220', 'M776.5 220V245', 'M776.5 260V405', 'M775.5 405V554',
            'M866.5 220V526L886 573', 'M894.5 164V552', 'M922.5 192V526L905 573',
        ];

        return `
            ${lines.map(d => `<path stroke="${this.red}" d="${d}"/>`).join('')}
            <path stroke="${this.red}" d="M455 167l3-3M611 167l3-3M667 195l3-3M639 223l3-3M752 223l3-3M894 167l3-3M922 195l3-3M866 223l3-3"/>
            <path fill="${this.red}" d="M409 164.5l5-3v6zM970 164.5l-4-3l-3 3l3 3zM970 192.5l-4-3l-3 3l3 3zM970 220.5l-4-3l-3 3l3 3zM773 192h6l-3 6z"/>
        `;

    }

    lamp(x, y) {

        return `
            <circle cx="${x}" cy="${y}" r="18.5" stroke="${this.yellow}"/>
            <path d="M${x - 13} ${y - 13}l26 26M${x + 13} ${y - 13}l-26 26" stroke="${this.green}"/>
        `;

    }

    contact(x, y) {

        return `<path d="M${x} ${y - 9}v4M${x - 4} ${y - 6}L${x} ${y + 3}v5M${x - 5} ${y - 4}l4 3" stroke="${this.yellow}"/>`;

    }

    get symbols() {

        const blade = 'M0 0C7 -2 9 -10 2 -14C-1 -16 -5 -17 -7 -16.5';

        return `
            ${this.lamp(498, 568)}
            ${this.lamp(653.5, 568)}
            <g transform="translate(763 568)" stroke="${this.yellow}">
                <circle r="18"/>
                ${[0, 90, 180, 270].map(a => `<path d="${blade}" transform="rotate(${a})"/>`).join('')}
            </g>
            <g stroke="${this.yellow}">
                <circle cx="894.5" cy="568" r="18"/>
                <path d="M892.5 553.5h4v10h-4zM885.5 572.5h2v10h-2zM903.5 572.5h2v10h-2z"/>
            </g>
            ${this.contact(512.5, 250)}
            ${this.contact(667.5, 251)}
            ${this.contact(776.5, 253)}
            <path d="M293 389L278 404L293 419" stroke="#fff"/>
        `;

    }

    get texts() {

        const y = this.yellow, g = this.green;

        return `
            <g font-weight="700">
                ${this.label(384, 160, 7, y, 'PE')}${this.label(392, 159, 5, g, '/2.201')}
                ${this.turned(985, 161, 7, y, 'PE')}${this.turned(986, 169, 5, g, '/1.201')}
                ${this.turned(975, 184, 6, y, 'L100')}${this.turned(975, 199, 5, g, '/1.203')}
                ${this.turned(985, 213, 6, y, 'N100')}${this.turned(986, 228, 5, g, '/1.203')}
                ${this.label(514, 242, 5, g, '13')}${this.label(514, 259, 5, g, '14')}
                ${this.label(669, 243, 5, g, '13')}${this.label(669, 257, 5, g, '14')}
                ${this.turned(527, 247, 7, y, '-SQ1')}
                ${this.label(647, 252, 6, y, 'CPDF')}
                ${this.label(763, 254, 6, y, 'KA1')}${this.label(759, 261, 5, g, '/4.000')}
            </g>

            ${this.turned(528, 538, 13, y, '国优')}${this.turned(542, 538, 13, y, '照明')}${this.turned(556, 538, 13, y, '箱内')}
            ${this.turned(682, 541, 13, y, '国优')}${this.turned(695, 541, 13, y, '照明')}${this.turned(708, 541, 13, y, '作业台')}${this.turned(722, 541, 13, y, '外组')}
            ${this.turned(785, 539, 13, y, '国优DS12038')}${this.turned(797, 539, 13, y, '50HZ')}${this.turned(810, 539, 13, y, '220V')}${this.turned(823, 539, 13, y, '排气扇')}
            ${this.turned(926, 539, 13, y, '蓝胜T071')}${this.turned(938, 539, 13, y, '50HZ')}${this.turned(952, 539, 13, y, '220V')}${this.turned(965, 539, 13, y, '三插座')}

            ${this.label(365, 625, 9, g, '机器名')}${this.label(365, 641, 9, g, '版本号')}
            ${this.label(478, 641, 9, g, '设计')}${this.label(590, 625, 9, g, '审核')}${this.label(591, 641, 9, g, '批准')}
            ${this.label(709, 619, 5, g, '主电路(风扇\\照明\\插座)')}${this.label(715, 641, 9, g, '图号')}
            ${this.label(807, 635, 4, g, '页数')}${this.label(807, 642, 4, g, '总数')}${this.label(846, 635, 4, g, '2')}${this.label(845, 642, 4, g, '10')}
            ${this.label(911, 629, 12, g, '東振')}
            ${this.label(946, 626, 10, g, '广州东振机电')}${this.label(946, 637, 10, g, '设备有限公司')}
        `;

    }

    get logo() {

        return `
            <g class="crisp">
                <path fill="#50c860" d="M854 618h27l5 3H854zM888 622h21l-2 3H886z"/>
                <path fill="#28e838" fill-rule="evenodd" d="M861 623h25l6 4v7l-6 5H861zM871 627v7h6l3-2v-3l-2-2z"/>
                <path fill="#28e838" d="M909 623l-11 10h42v3h-44l-3 3h-5l14-13h-8v-3zM899 637h41v2H896z"/>
                <path stroke="#000" d="M861 625.5h24M861 629.5h10M861 633.5h10M861 637.5h26M854 619.5h28"/>
            </g>
        `;

    }

    get template() {

        return `
            <style>
                :host { display: block; flex: 1; min-width: 0; overflow: hidden; }
                svg { display: block; width: 100%; height: 100%; fill: none; }
                .crisp { shape-rendering: crispEdges; }
                text { font-family: "Noto Sans Mono CJK SC", "Liberation Mono", "Noto Sans CJK SC", monospace; stroke: none; white-space: pre; }
            </style>
            <svg>
                <g transform="translate(-277 -147)">
                    ${this.frame}${this.rulerMarks}${this.wires}${this.dots}
                    ${this.symbols}${this.texts}${this.logo}
                </g>
            </svg>
        `;

    }

}

customElements.define('schematic-view', SchematicView);


class FormatBar extends HTMLElement {

    constructor() {

        super();

        const combo = (cls = '', value = '没有数据') => `<combo-box class="${cls}" label="格式" value="${value}" disabled></combo-box>`;

        this.attachShadow({mode: "open"}).innerHTML = `
            <style>
                :host {
                    display: flex;
                    align-items: flex-start;
                    gap: 4px;
                    box-sizing: border-box;
                    flex: none;
                    height: 37px;
                    padding: 5px 13px 0 4px;
                    border-top: 1px solid #000;
                    border-bottom: 1px solid #808080;
                    position: relative;
                }
                .grip { width: 1px; height: 22px; margin-right: -1px; border: 1px solid; border-color: #fff #808080 #808080 #fff; }
                combo-box { width: 122px; flex: none; }
                .wide { width: auto; flex: 1; }
                hr { width: 0; height: 24px; margin: 0; border: 0; border-left: 1px solid #808080; border-right: 1px solid #fff; }
                .styles { display: flex; gap: 14px; margin-right: 4px; }
                .styles button { width: 16px; height: 20px; padding: 0; border: 0; background: none; color: #a8a49c; font: bold 14px/20px "Liberation Serif", serif; text-shadow: 1px 1px 0 #fff; }
                .brand { position: absolute; right: 0; top: 2px; width: 138px; height: 46px; }
            </style>
            <div class="grip"></div>
            ${combo()}${combo()}
            <hr>
            <div class="styles"><button>B</button><button><i>I</i></button><button><u>U</u></button></div>
            <hr>
            ${combo()}
            <hr>
            ${combo()}${combo()}${combo('wide')}${combo('', '')}
            <svg class="brand" viewBox="0 0 138 46">
                <g fill="none">
                    <circle cx="17" cy="20" r="10" stroke="#f07818" stroke-width="5" stroke-dasharray="5 3"/>
                    <circle cx="17" cy="20" r="6" stroke="#f07818" stroke-width="5"/>
                    <circle cx="47" cy="27" r="13" stroke="#a0d030" stroke-width="6" stroke-dasharray="6 4"/>
                    <circle cx="47" cy="27" r="8" stroke="#a0d030" stroke-width="7"/>
                </g>
                <text x="58" y="15" font-family="Noto Sans CJK SC, sans-serif" font-size="13" font-weight="700" fill="#f08030">中华工控网</text>
                <text x="67" y="29" font-family="Liberation Sans, sans-serif" font-size="11" font-weight="700" fill="#707070">gkong.com</text>
            </svg>
        `;

    }

}

customElements.define('format-bar', FormatBar);


class StatusBar extends HTMLElement {

    constructor() {

        super();

        this.attachShadow({mode: "open"}).innerHTML = `
            <style>
                :host { display: flex; flex: none; gap: 2px; box-sizing: border-box; height: 21px; padding-top: 2px; border-top: 1px solid #fff; }
                div { box-sizing: border-box; padding-left: 1px; border: 1px solid; border-color: #808080 #fff #fff #808080; line-height: 15px; white-space: pre; }
                .message { flex: 659; }
                .blank { flex: 347; }
                .open { width: 157px; }
                .logic { width: 91px; }
                .flag { width: 62px; }
                .end { width: 42px; }
            </style>
            <div class="message">2 主电路(风扇\\照明\\插座)</div>
            <div class="blank"></div>
            <div class="open">打开: 8.00 mm</div>
            <div class="logic">逻辑 1:0.67</div>
            <div class="flag">#</div>
            <div class="end"></div>
        `;

    }

}

customElements.define('status-bar', StatusBar);

</script>
</body>
</html>
